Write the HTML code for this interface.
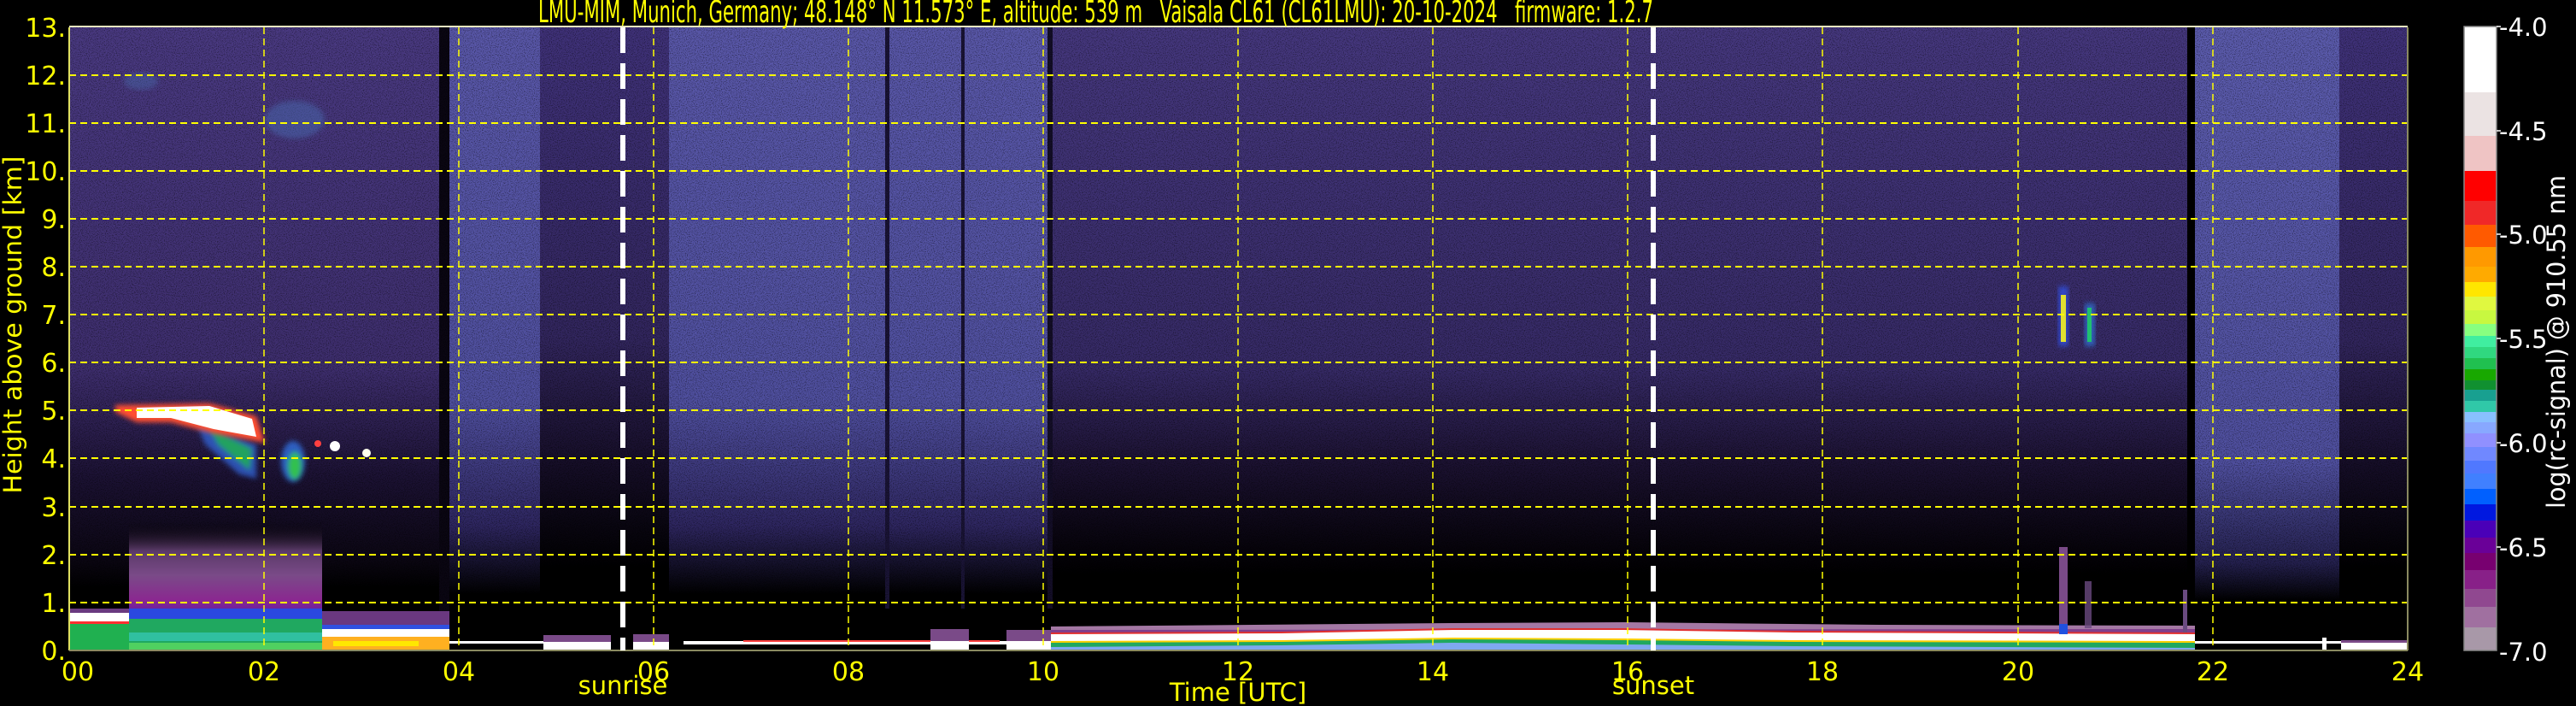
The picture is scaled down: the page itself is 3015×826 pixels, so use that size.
<!DOCTYPE html>
<html><head><meta charset="utf-8"><style>
html,body{margin:0;padding:0;background:#000;width:3015px;height:826px;overflow:hidden}
svg{display:block}
text{font-family:"DejaVu Sans","Liberation Sans",sans-serif}
</style></head><body>
<svg width="3015" height="826" viewBox="0 0 3015 826" xmlns="http://www.w3.org/2000/svg">
<defs>
<linearGradient id="gA" x1="0" y1="32" x2="0" y2="761" gradientUnits="userSpaceOnUse">
<stop offset="0" stop-color="#4a3a82"/><stop offset="0.55" stop-color="#3e2e6e"/><stop offset="0.72" stop-color="#1c1234"/><stop offset="0.85" stop-color="#0c0714"/><stop offset="0.9" stop-color="#000"/></linearGradient>
<linearGradient id="gD" x1="0" y1="32" x2="0" y2="761" gradientUnits="userSpaceOnUse">
<stop offset="0" stop-color="#5a58aa"/><stop offset="0.6" stop-color="#5050a0"/><stop offset="0.8" stop-color="#2e2660"/><stop offset="0.91" stop-color="#000"/></linearGradient>
<linearGradient id="gM" x1="0" y1="32" x2="0" y2="761" gradientUnits="userSpaceOnUse">
<stop offset="0" stop-color="#40327a"/><stop offset="0.5" stop-color="#32265e"/><stop offset="0.7" stop-color="#160e28"/><stop offset="0.87" stop-color="#000"/></linearGradient>
<linearGradient id="gR" x1="0" y1="32" x2="0" y2="761" gradientUnits="userSpaceOnUse">
<stop offset="0" stop-color="#46387f"/><stop offset="0.55" stop-color="#362a66"/><stop offset="0.7" stop-color="#1c1232"/><stop offset="0.84" stop-color="#06030a"/><stop offset="0.88" stop-color="#000"/></linearGradient>
<linearGradient id="gDR" x1="0" y1="32" x2="0" y2="761" gradientUnits="userSpaceOnUse">
<stop offset="0" stop-color="#5c5cae"/><stop offset="0.7" stop-color="#5050a0"/><stop offset="0.86" stop-color="#24204e"/><stop offset="0.92" stop-color="#000"/></linearGradient>
<linearGradient id="haze" x1="0" y1="610" x2="0" y2="725" gradientUnits="userSpaceOnUse">
<stop offset="0" stop-color="#000" stop-opacity="0"/><stop offset="0.3" stop-color="#5a3a68"/><stop offset="0.55" stop-color="#7a4a88"/><stop offset="0.8" stop-color="#8a2890"/><stop offset="1" stop-color="#5018a8"/></linearGradient>
<filter id="spk" x="0" y="0" width="100%" height="100%">
<feTurbulence type="fractalNoise" baseFrequency="0.9" numOctaves="1" seed="3"/>
<feColorMatrix type="matrix" values="0 0 0 0 0  0 0 0 0 0  0 0 0 0 0  0 0 0 -2.6 1.4"/>
</filter>
<filter id="blur"><feGaussianBlur stdDeviation="3"/></filter>
</defs>

<rect x="81" y="32" width="445" height="729" fill="url(#gA)"/>
<rect x="514" y="32" width="12" height="729" fill="#0a0612"/>
<rect x="526" y="32" width="106" height="729" fill="url(#gD)"/>
<rect x="632" y="32" width="151" height="729" fill="url(#gM)"/>
<rect x="783" y="32" width="447" height="729" fill="url(#gD)"/>
<rect x="1230" y="32" width="1330" height="729" fill="url(#gR)"/>
<rect x="2560" y="32" width="9" height="729" fill="#000"/>
<rect x="2569" y="32" width="169" height="729" fill="url(#gDR)"/>
<rect x="2738" y="32" width="80" height="729" fill="url(#gM)"/>
<rect x="1036" y="32" width="5" height="680" fill="#1a1436"/>
<rect x="1125" y="32" width="4" height="680" fill="#1a1436"/>
<rect x="1226" y="32" width="6" height="680" fill="#140e28"/>
<rect x="81" y="32" width="2737" height="729" filter="url(#spk)" opacity="0.6"/>

<ellipse cx="345" cy="140" rx="35" ry="22" fill="#4a6ab0" opacity="0.5" filter="url(#blur)"/>
<ellipse cx="165" cy="95" rx="20" ry="10" fill="#4a70b0" opacity="0.4" filter="url(#blur)"/>

<g filter="url(#blur)">
<polygon points="230,495 300,520 300,560 280,555 240,520" fill="#3060d0" opacity="0.8"/>
<polygon points="245,500 295,525 292,550 255,520" fill="#20b050" opacity="0.85"/>
<ellipse cx="343" cy="540" rx="14" ry="24" fill="#3070e0" opacity="0.8"/>
<ellipse cx="345" cy="545" rx="8" ry="16" fill="#30c050"/>
</g>
<polygon points="135,474 245,472 300,487 310,518 250,507 200,494 160,494 135,482" fill="#ff5030" filter="url(#blur)"/>
<polygon points="160,477 245,475 295,490 300,511 250,502 200,489 160,489" fill="#ffffff"/>
<circle cx="372" cy="519" r="4" fill="#ff4040"/><circle cx="392" cy="522" r="6" fill="#fff"/><circle cx="429" cy="530" r="5" fill="#ffe"/>

<rect x="2409" y="335" width="12" height="70" fill="#3050e0" opacity="0.8" filter="url(#blur)"/>
<rect x="2412" y="345" width="6" height="55" fill="#e0e030"/>
<rect x="2440" y="355" width="12" height="50" fill="#3070d0" opacity="0.8" filter="url(#blur)"/>
<rect x="2443" y="360" width="5" height="40" fill="#20c070"/>

<rect x="81" y="712" width="70" height="6" fill="#6a3a80"/>
<rect x="81" y="717" width="70" height="10" fill="#ffffff"/>
<rect x="81" y="727" width="70" height="3" fill="#ff3030"/>
<rect x="81" y="730" width="70" height="31" fill="#20b050"/>
<rect x="151" y="610" width="226" height="115" fill="url(#haze)"/>
<rect x="151" y="712" width="226" height="14" fill="#2a48e0"/>
<rect x="151" y="724" width="226" height="37" fill="#20a860"/>
<rect x="151" y="740" width="226" height="10" fill="#30c0a0"/>
<rect x="151" y="752" width="226" height="9" fill="#50d060"/>
<rect x="377" y="715" width="149" height="20" fill="#6a3880"/>
<rect x="377" y="731" width="149" height="5" fill="#3050e0"/>
<rect x="377" y="736" width="149" height="9" fill="#ffffff"/>
<rect x="377" y="745" width="149" height="16" fill="#ffb020"/>
<rect x="390" y="750" width="100" height="6" fill="#ffe800"/>
<rect x="526" y="750" width="160" height="3" fill="#ffffff"/>
<rect x="636" y="743" width="79" height="8" fill="#7a4a88"/>
<rect x="636" y="751" width="79" height="10" fill="#ffffff"/>
<rect x="741" y="742" width="42" height="9" fill="#7a4a88"/>
<rect x="741" y="751" width="42" height="10" fill="#ffffff"/>
<rect x="800" y="750" width="385" height="4" fill="#ffffff"/>
<rect x="870" y="749" width="300" height="2" fill="#ff4040"/>
<rect x="1089" y="736" width="45" height="14" fill="#7a4a88"/>
<rect x="1089" y="750" width="45" height="11" fill="#ffffff"/>
<rect x="1178" y="737" width="52" height="14" fill="#7a4a88"/>
<rect x="1178" y="750" width="52" height="11" fill="#ffffff"/>
<polygon points="1230,735 1700,731 1900,730 2200,733 2569,734 2569,761 1230,761" fill="#7e3e8c"/>
<polygon points="1230,733 1700,729 1900,728 2200,731 2569,732 2569,736 1230,737" fill="#a478a4"/>
<polygon points="1230,740 1500,739 1700,735 1900,735 2100,738 2569,740 2569,761 1230,761" fill="#e03030"/>
<polygon points="1230,742 1500,741 1700,737 1900,737 2100,740 2569,742 2569,761 1230,761" fill="#ffffff"/>
<polygon points="1230,750 1500,749 1700,746 1900,747 2100,749 2569,750 2569,761 1230,761" fill="#ffd000"/>
<polygon points="1230,752 1500,751 1700,748 1900,749 2100,751 2569,752 2569,761 1230,761" fill="#20a860"/>
<polygon points="1230,757 1500,755 1700,752 1900,754 2100,756 2569,758 2569,761 1230,761" fill="#80a8f0"/>
<rect x="2410" y="640" width="10" height="95" fill="#7a4a88"/>
<rect x="2410" y="730" width="10" height="12" fill="#2050e0"/>
<rect x="2440" y="680" width="8" height="55" fill="#6a4a80" opacity="0.8"/>
<rect x="2555" y="690" width="5" height="50" fill="#6a4a80"/>
<rect x="2569" y="750" width="250" height="3" fill="#ffffff"/>
<rect x="2718" y="746" width="5" height="15" fill="#ffffff"/>
<rect x="2740" y="751" width="78" height="10" fill="#ffffff"/>
<rect x="2740" y="749" width="78" height="3" fill="#7a4a88"/>

<g stroke="#ffff00" stroke-width="2" stroke-dasharray="8,5" fill="none">
<line x1="81" y1="88" x2="2818" y2="88"/><line x1="81" y1="144" x2="2818" y2="144"/>
<line x1="81" y1="200" x2="2818" y2="200"/><line x1="81" y1="256" x2="2818" y2="256"/>
<line x1="81" y1="312" x2="2818" y2="312"/><line x1="81" y1="368" x2="2818" y2="368"/>
<line x1="81" y1="424" x2="2818" y2="424"/><line x1="81" y1="480" x2="2818" y2="480"/>
<line x1="81" y1="536" x2="2818" y2="536"/><line x1="81" y1="593" x2="2818" y2="593"/>
<line x1="81" y1="649" x2="2818" y2="649"/><line x1="81" y1="705" x2="2818" y2="705"/>
</g>
<g stroke="#ffff00" stroke-width="1.5" stroke-dasharray="8,5" fill="none">
<line x1="309" y1="32" x2="309" y2="761"/><line x1="537" y1="32" x2="537" y2="761"/>
<line x1="765" y1="32" x2="765" y2="761"/><line x1="993" y1="32" x2="993" y2="761"/>
<line x1="1221" y1="32" x2="1221" y2="761"/><line x1="1449" y1="32" x2="1449" y2="761"/>
<line x1="1677" y1="32" x2="1677" y2="761"/><line x1="1905" y1="32" x2="1905" y2="761"/>
<line x1="2133" y1="32" x2="2133" y2="761"/><line x1="2362" y1="32" x2="2362" y2="761"/>
<line x1="2590" y1="32" x2="2590" y2="761"/>
</g>
<line x1="81" y1="32" x2="81" y2="761" stroke="#e0e060" stroke-width="2"/>
<line x1="81" y1="31" x2="2818" y2="31" stroke="#e8e8c0" stroke-width="2"/>
<line x1="81" y1="761" x2="2818" y2="761" stroke="#8a8a60" stroke-width="2"/>
<line x1="2818" y1="32" x2="2818" y2="761" stroke="#8a8a60" stroke-width="2"/>
<g stroke="#ffffff" stroke-width="6" stroke-dasharray="30,12">
<line x1="729" y1="32" x2="729" y2="761"/><line x1="1935" y1="32" x2="1935" y2="761"/>
</g>

<text x="630" y="26" font-size="36" fill="#ffff00" textLength="1305" lengthAdjust="spacingAndGlyphs" xml:space="preserve">LMU-MIM, Munich, Germany; 48.148° N 11.573° E, altitude: 539 m   Vaisala CL61 (CL61LMU): 20-10-2024   firmware: 1.2.7</text>

<g font-size="30" fill="#ffff00" text-anchor="end">
<text x="77" y="43">13.</text><text x="77" y="99">12.</text><text x="77" y="155">11.</text>
<text x="77" y="211">10.</text><text x="77" y="267">9.</text><text x="77" y="323">8.</text>
<text x="77" y="379">7.</text><text x="77" y="435">6.</text><text x="77" y="491">5.</text>
<text x="77" y="547">4.</text><text x="77" y="604">3.</text><text x="77" y="660">2.</text>
<text x="77" y="716">1.</text><text x="77" y="772">0.</text>
</g>
<text transform="translate(25,380) rotate(-90)" font-size="29" fill="#ffff00" text-anchor="middle" textLength="395" lengthAdjust="spacingAndGlyphs">Height above ground [km]</text>

<g font-size="30" fill="#ffff00" text-anchor="middle">
<text x="91" y="796">00</text><text x="309" y="796">02</text><text x="537" y="796">04</text>
<text x="765" y="796">06</text><text x="993" y="796">08</text><text x="1221" y="796">10</text>
<text x="1449" y="796">12</text><text x="1677" y="796">14</text><text x="1905" y="796">16</text>
<text x="2133" y="796">18</text><text x="2362" y="796">20</text><text x="2590" y="796">22</text>
<text x="2818" y="796">24</text>
</g>
<text x="1449" y="820" font-size="29" fill="#ffff00" text-anchor="middle">Time [UTC]</text>
<text x="729" y="812" font-size="29" fill="#ffff00" text-anchor="middle">sunrise</text>
<text x="1935" y="812" font-size="29" fill="#ffff00" text-anchor="middle">sunset</text>

<g>
<rect x="2884" y="31" width="38" height="77" fill="#ffffff"/>
<rect x="2884" y="108" width="38" height="51" fill="#ebe3e3"/>
<rect x="2884" y="159" width="38" height="41" fill="#efc4c4"/>
<rect x="2884" y="200" width="38" height="35" fill="#ff0000"/>
<rect x="2884" y="235" width="38" height="28" fill="#f02828"/>
<rect x="2884" y="263" width="38" height="26" fill="#ff5a00"/>
<rect x="2884" y="289" width="38" height="23" fill="#ff9900"/>
<rect x="2884" y="312" width="38" height="18" fill="#ffaa00"/>
<rect x="2884" y="330" width="38" height="17" fill="#ffe600"/>
<rect x="2884" y="347" width="38" height="16" fill="#e0f840"/>
<rect x="2884" y="363" width="38" height="16" fill="#c8f840"/>
<rect x="2884" y="379" width="38" height="14" fill="#88ff80"/>
<rect x="2884" y="393" width="38" height="13" fill="#40eea0"/>
<rect x="2884" y="406" width="38" height="13" fill="#30d880"/>
<rect x="2884" y="419" width="38" height="13" fill="#20c050"/>
<rect x="2884" y="432" width="38" height="13" fill="#18a800"/>
<rect x="2884" y="445" width="38" height="11" fill="#109030"/>
<rect x="2884" y="456" width="38" height="13" fill="#18a090"/>
<rect x="2884" y="469" width="38" height="13" fill="#30c8a8"/>
<rect x="2884" y="482" width="38" height="12" fill="#88c0ff"/>
<rect x="2884" y="494" width="38" height="13" fill="#88a8ff"/>
<rect x="2884" y="507" width="38" height="16" fill="#9090ff"/>
<rect x="2884" y="523" width="38" height="16" fill="#7088ff"/>
<rect x="2884" y="539" width="38" height="15" fill="#5078ff"/>
<rect x="2884" y="554" width="38" height="18" fill="#4080ff"/>
<rect x="2884" y="572" width="38" height="18" fill="#0060ff"/>
<rect x="2884" y="590" width="38" height="19" fill="#0018e0"/>
<rect x="2884" y="609" width="38" height="20" fill="#4a00b8"/>
<rect x="2884" y="629" width="38" height="18" fill="#6a0098"/>
<rect x="2884" y="647" width="38" height="20" fill="#780070"/>
<rect x="2884" y="667" width="38" height="22" fill="#882088"/>
<rect x="2884" y="689" width="38" height="21" fill="#904890"/>
<rect x="2884" y="710" width="38" height="24" fill="#a070a0"/>
<rect x="2884" y="734" width="38" height="27" fill="#a898a8"/>
<rect x="2884" y="31" width="38" height="730" fill="none" stroke="#888" stroke-width="1.5"/>
</g>
<g font-size="29" fill="#ffffff">
<text x="2925" y="42">-4.0</text><text x="2925" y="164">-4.5</text><text x="2925" y="285">-5.0</text>
<text x="2925" y="407">-5.5</text><text x="2925" y="529">-6.0</text><text x="2925" y="651">-6.5</text>
<text x="2925" y="773">-7.0</text>
</g>
<g stroke="#fff" stroke-width="1.5">
<line x1="2922" y1="31" x2="2927" y2="31"/><line x1="2922" y1="153" x2="2927" y2="153"/>
<line x1="2922" y1="274" x2="2927" y2="274"/><line x1="2922" y1="396" x2="2927" y2="396"/>
<line x1="2922" y1="518" x2="2927" y2="518"/><line x1="2922" y1="640" x2="2927" y2="640"/>
</g>
<text transform="translate(3002,400) rotate(-90)" font-size="29" fill="#ffffff" text-anchor="middle" textLength="390" lengthAdjust="spacingAndGlyphs">log(rc-signal) @ 910.55 nm</text>
</svg>
</body></html>
